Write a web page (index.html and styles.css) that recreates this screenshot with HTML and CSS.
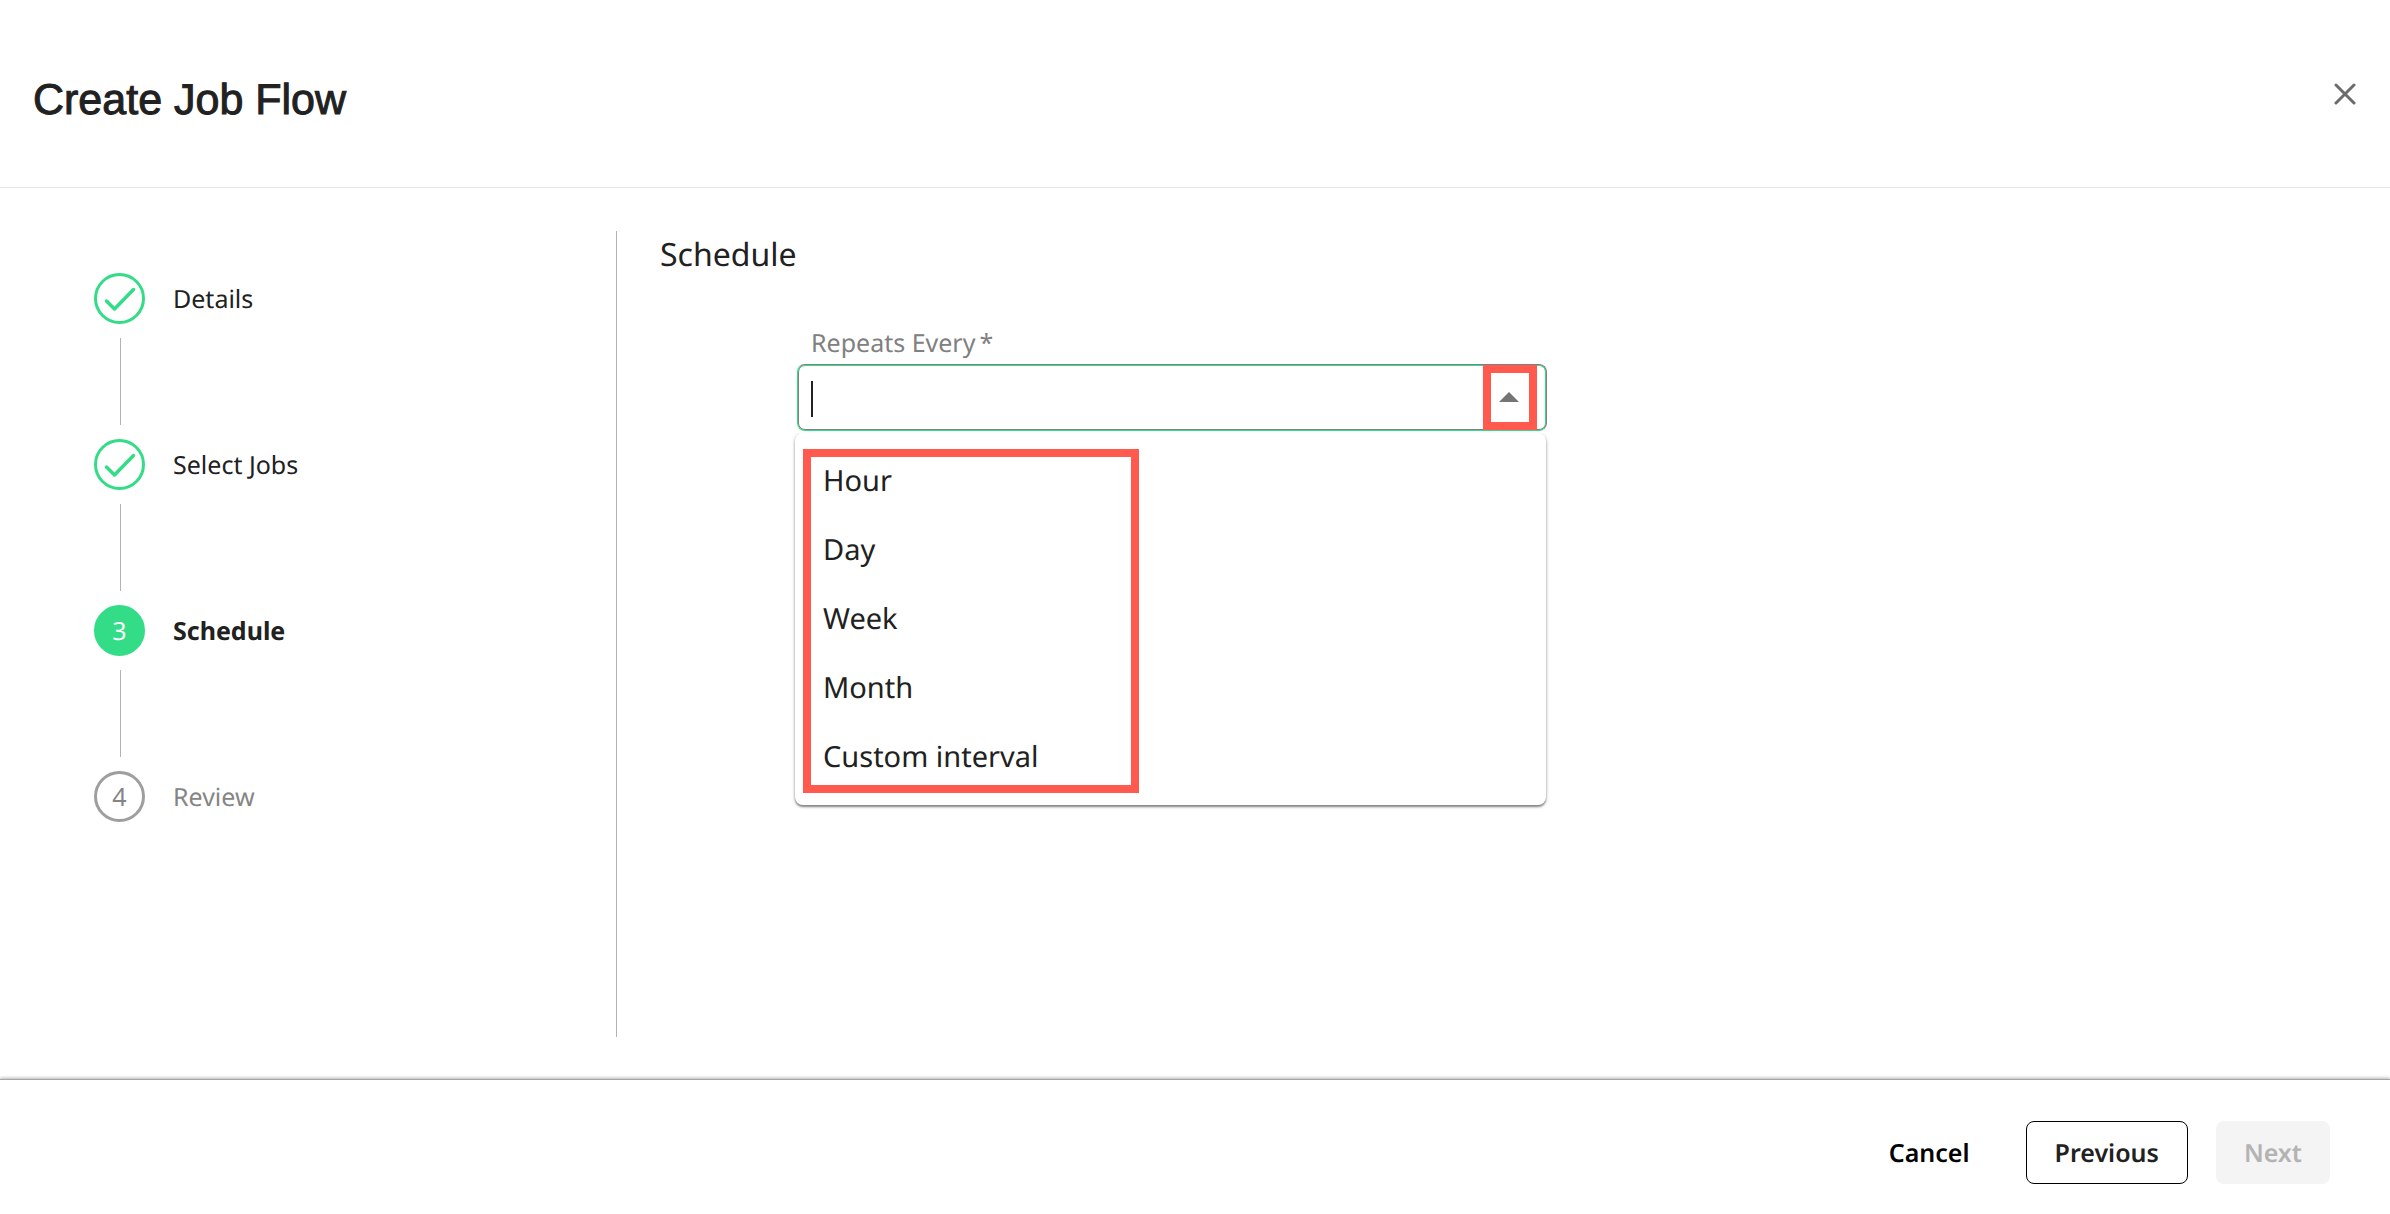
FILE: index.html
```html
<!DOCTYPE html>
<html lang="en">
<head>
<meta charset="utf-8">
<title>Create Job Flow</title>
<link rel="stylesheet" href="styles.css">
</head>
<body>
<div class="dialog">
  <header class="header">
    <h1 class="title">Create Job Flow</h1>
    <button class="close" type="button" aria-label="Close">
      <svg width="22" height="22" viewBox="0 0 22 22" fill="none" stroke="#6b6b6b" stroke-width="3" stroke-linecap="round"><path d="M2 2l18 18M20 2L2 20"/></svg>
    </button>
  </header>

  <main class="main">
    <nav class="sidebar" aria-label="Steps">
      <ol class="steps">
        <li class="step">
          <span class="marker done"><svg width="32" height="26" viewBox="0 0 32 26" fill="none" stroke="#33dc86" stroke-width="3.500" stroke-linecap="round" stroke-linejoin="round"><path d="M2.500 15l8 8L29.500 3.500"/></svg></span>
          <span class="step-label">Details</span>
        </li>
        <li class="step">
          <span class="marker done"><svg width="32" height="26" viewBox="0 0 32 26" fill="none" stroke="#33dc86" stroke-width="3.500" stroke-linecap="round" stroke-linejoin="round"><path d="M2.500 15l8 8L29.500 3.500"/></svg></span>
          <span class="step-label">Select Jobs</span>
        </li>
        <li class="step current" aria-current="step">
          <span class="marker">3</span>
          <span class="step-label">Schedule</span>
        </li>
        <li class="step pending">
          <span class="marker">4</span>
          <span class="step-label">Review</span>
        </li>
      </ol>
    </nav>

    <section class="content">
      <h2 class="heading">Schedule</h2>
      <div class="field">
        <label class="field-label" for="repeats">Repeats Every<span class="required">*</span></label>
        <div class="combo">
          <input class="combo-input" id="repeats" type="text" role="combobox" aria-expanded="true" aria-controls="options" autocomplete="off">
          <span class="caret"></span>
          <button class="toggle" type="button" aria-label="Hide options">
            <svg width="20" height="10" viewBox="0 0 20 10" fill="#757575"><path d="M0 10L10 0l10 10z"/></svg>
          </button>
        </div>
        <div class="popup">
          <ul class="options" id="options" role="listbox">
            <li class="option" role="option">Hour</li>
            <li class="option" role="option">Day</li>
            <li class="option" role="option">Week</li>
            <li class="option" role="option">Month</li>
            <li class="option" role="option">Custom interval</li>
          </ul>
        </div>
      </div>
    </section>
  </main>

  <footer class="footer">
    <button class="btn btn-text" type="button">Cancel</button>
    <button class="btn btn-outline" type="button">Previous</button>
    <button class="btn btn-primary" type="button" disabled>Next</button>
  </footer>
</div>
</body>
</html>
```
FILE: styles.css
```css
* {
  box-sizing: border-box;
}

body {
  margin: 0;
  background: #fff;
  color: #212121;
  font-family: "Noto Sans", "Open Sans", sans-serif;
  font-size: 25px;
  line-height: 36px;
  text-rendering: geometricPrecision;
}

button {
  margin: 0;
  padding: 0;
  border: 0;
  background: none;
  color: inherit;
  font: inherit;
  text-rendering: inherit;
}

.dialog {
  display: flex;
  flex-direction: column;
  min-height: 100vh;
}

.header {
  display: flex;
  align-items: flex-start;
  justify-content: space-between;
  padding: 76px 34px 63px 33px;
  border-bottom: 1px solid #e6e6e6;
}

.title {
  margin: 0;
  font-family: "Liberation Sans", Arial, sans-serif;
  font-size: 43px;
  font-weight: 400;
  line-height: 48px;
  -webkit-text-stroke: 1px #212121;
}

.close {
  display: flex;
  padding-top: 7px;
}

.main {
  display: flex;
  flex: 1;
  padding: 43px 44px 42px 94px;
}

.sidebar {
  flex: none;
  width: 523px;
  padding-top: 42px;
  border-right: 1px solid #b3b3b3;
}

.steps {
  display: flex;
  flex-direction: column;
  gap: 115px;
  margin: 0;
  padding: 0;
  list-style: none;
}

.step {
  position: relative;
  display: flex;
  align-items: center;
  gap: 28px;
  height: 51px;
}

.step:not(:last-child)::after {
  content: "";
  position: absolute;
  top: 65px;
  left: 26px;
  width: 1px;
  height: 87px;
  background: #b3b3b3;
}

.marker {
  display: flex;
  align-items: center;
  justify-content: center;
  width: 51px;
  height: 51px;
  border: 3px solid #33dc86;
  border-radius: 50%;
}

.current .marker {
  background: #33dc86;
  color: #fff;
}

.current .step-label {
  font-weight: 700;
}

.pending {
  color: #858585;
}

.pending .marker {
  border-color: #9e9e9e;
}

.content {
  flex: 1;
  padding: 0 43px;
}

.heading {
  margin: 0 0 46px;
  font-size: 32px;
  font-weight: 400;
  line-height: 48px;
}

.field {
  width: 750px;
  margin-left: 137px;
}

.field-label {
  display: block;
  padding-left: 14px;
  padding-bottom: 3px;
  color: #808080;
}

.required {
  padding-left: 4px;
}

.combo {
  position: relative;
}

.combo-input {
  display: block;
  width: 100%;
  height: 67px;
  padding: 0 80px 0 14px;
  border: 1px solid #33dc86;
  border-top-color: #808080;
  border-right-color: #808080;
  border-radius: 8px;
  outline: 0;
  background: #fff;
  font: inherit;
  box-shadow: inset 0 1px #33dc86, inset 0 -1px #808080, inset 1px 0 #808080, inset -1px 0 #33dc86;
}

.caret {
  position: absolute;
  top: 17px;
  left: 14px;
  width: 2px;
  height: 36px;
  background: #212121;
}

.toggle {
  position: absolute;
  top: 1px;
  right: 10px;
  display: flex;
  align-items: center;
  justify-content: center;
  width: 54px;
  height: 65px;
  padding: 0 2px 2px 0;
  border: 8px solid #ff5a4d;
}

.popup {
  margin: 2px 1px 0 -2px;
  padding: 16px 8px 12px;
  border-radius: 8px;
  background: #fff;
  box-shadow: 0 2px 2px rgba(0, 0, 0, .4), 0 1px 4px rgba(0, 0, 0, .2);
  clip-path: inset(0 -8px -8px -8px);
}

.options {
  width: 336px;
  margin: 0;
  padding: 0 12px;
  border: 8px solid #ff5a4d;
  list-style: none;
}

.option {
  padding-bottom: 21px;
  font-size: 29px;
  line-height: 48px;
}

.option:last-child {
  padding-bottom: 4px;
}

.footer {
  display: flex;
  align-items: center;
  justify-content: flex-end;
  gap: 28px;
  padding: 41px 60px 30px;
  border-top: 1px solid #a6a6a6;
  box-shadow: 0 -1px 3px rgba(0, 0, 0, .3);
}

.btn {
  height: 63px;
  padding: 0 28px;
  border-radius: 8px;
  font-weight: 600;
}

.btn-text {
  color: #000;
}

.btn-outline {
  border: 1px solid #000;
}

.btn-primary {
  background: #f4f4f4;
  color: #b3b3b3;
}
```
